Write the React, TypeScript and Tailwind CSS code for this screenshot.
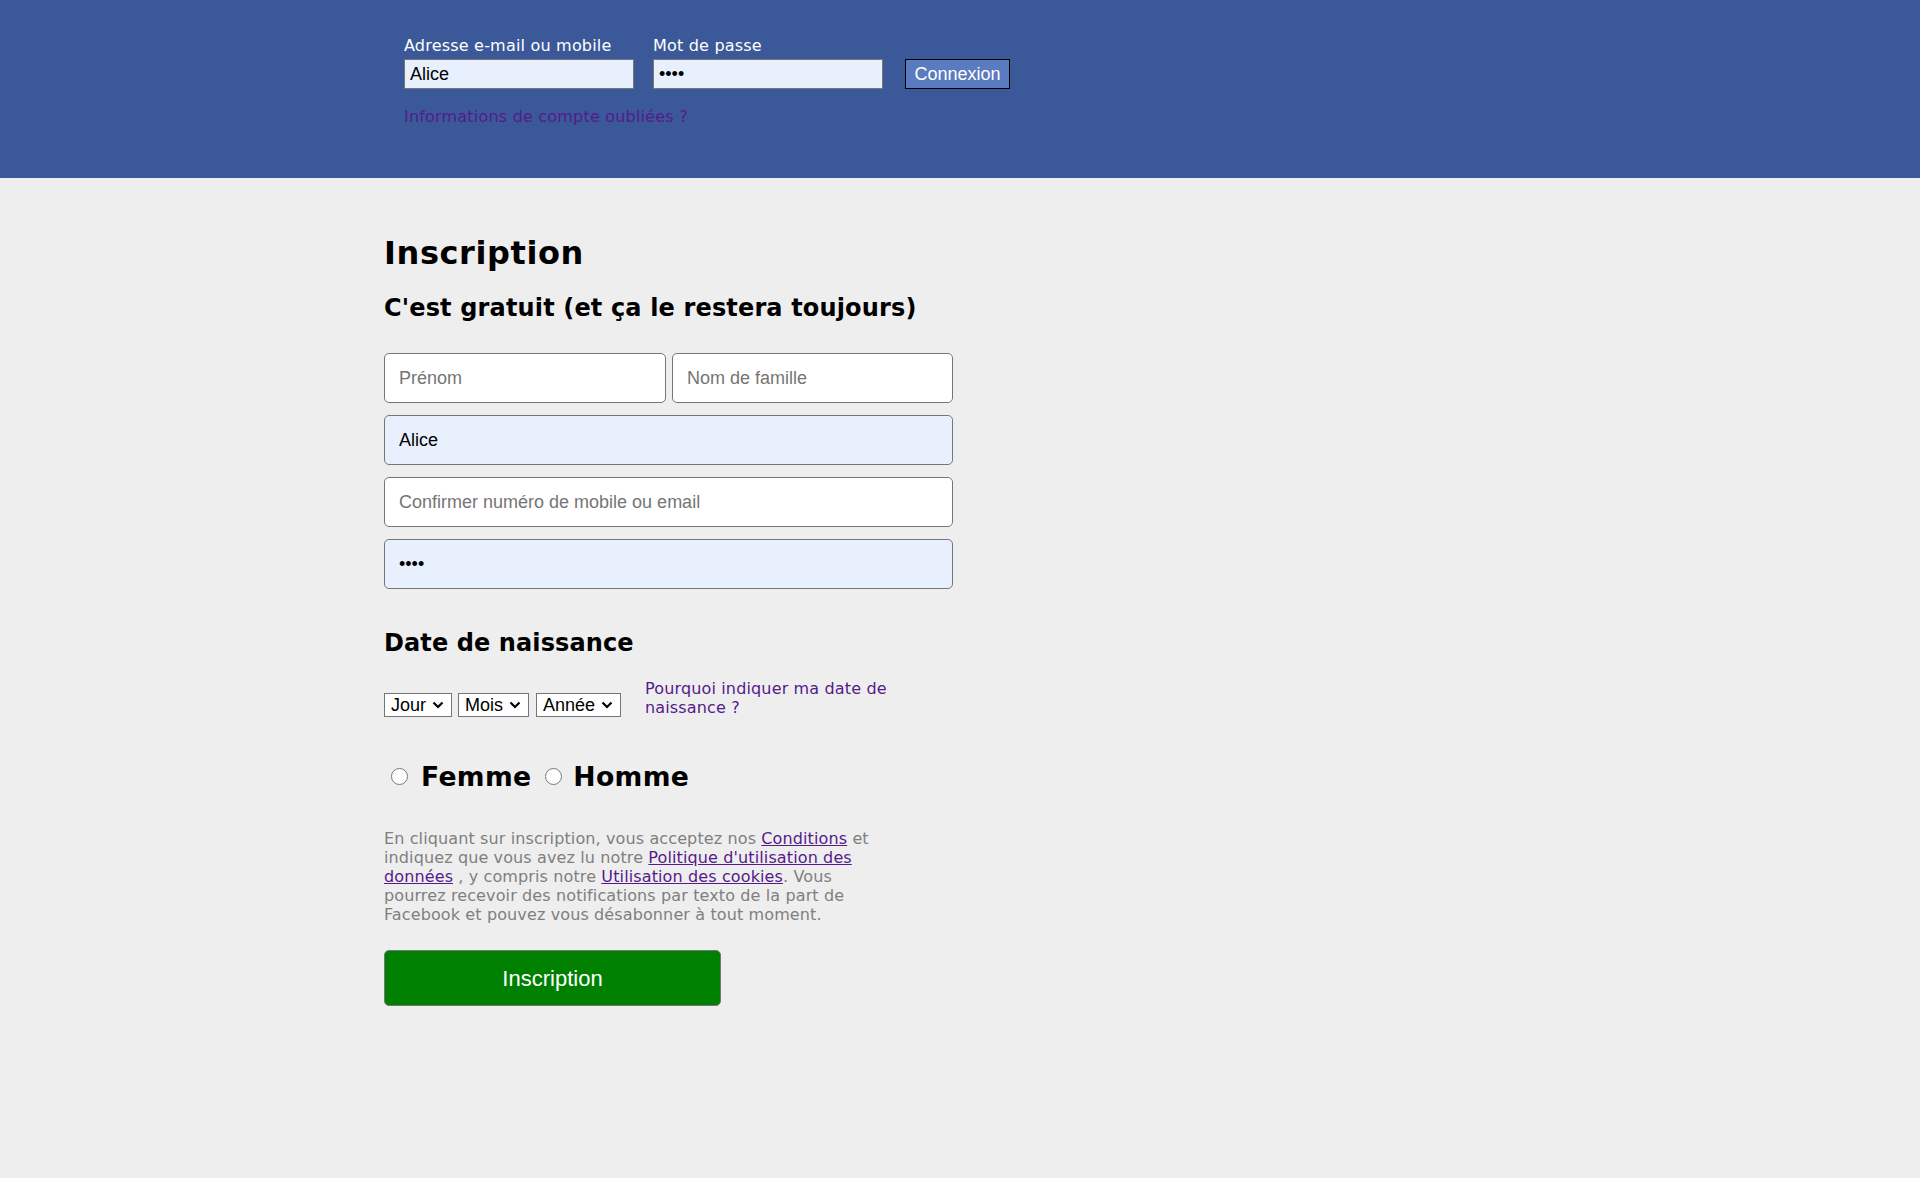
const sans = "font-['DejaVu_Sans',Verdana,sans-serif]";
const arial = "font-['Liberation_Sans',Arial,sans-serif]";

function Chevron() {
  return (
    <svg width="12" height="8" viewBox="0 0 12 8" className="ml-[6px] shrink-0">
      <polyline points="1.5,1.5 6,6 10.5,1.5" fill="none" stroke="#000" strokeWidth="2.2" />
    </svg>
  );
}

function FakeSelect({ label, width }: { label: string; width: string }) {
  return (
    <div
      className={`flex h-[24px] items-center justify-between border border-[#767676] bg-white pr-[8px] pl-[6px] text-[18px] leading-none text-black ${arial} ${width}`}
    >
      <span>{label}</span>
      <Chevron />
    </div>
  );
}

export default function App() {
  return (
    <div className={`min-h-[1178px] bg-[#eeeeee] ${sans}`}>
      {/* Login bar */}
      <header className="h-[178px] bg-[#3b5998]">
        <div className="ml-[20%] pt-[36px] pl-[20px]">
          <div className="flex items-end">
            <div className="w-[230px]">
              <label className="mb-[4px] block text-[16px] leading-[19px] tracking-[0.2px] text-white">
                Adresse e-mail ou mobile
              </label>
              <input
                readOnly
                defaultValue="Alice"
                className={`block h-[30px] w-[230px] border border-[#767676] bg-[#e8f0fe] px-[5px] text-[18px] text-black outline-none ${arial}`}
              />
            </div>
            <div className="ml-[19px] w-[230px]">
              <label className="mb-[4px] block text-[16px] leading-[19px] tracking-[0.2px] text-white">
                Mot de passe
              </label>
              <input
                readOnly
                type="password"
                defaultValue="1234"
                className={`block h-[30px] w-[230px] border border-[#767676] bg-[#e8f0fe] px-[5px] text-[18px] text-black outline-none ${arial}`}
              />
            </div>
            <button
              className={`ml-[22px] h-[30px] w-[105px] border border-black bg-[#5b7bc1] text-[18px] text-white ${arial}`}
            >
              Connexion
            </button>
          </div>
          <a
            href="#"
            className="mt-[18px] block text-[16px] leading-[19px] tracking-[0.2px] text-[#551a8b]"
          >
            Informations de compte oubliées ?
          </a>
        </div>
      </header>

      {/* Sign-up form */}
      <main className="ml-[20%] w-[569px] pt-[57px] pb-[40px]">
        <h1 className="text-[32px] leading-[37px] font-bold tracking-[0.6px] text-black">Inscription</h1>
        <h2 className="mt-[22px] text-[24px] leading-[28px] font-bold tracking-[0.15px] text-black">
          C'est gratuit (et ça le restera toujours)
        </h2>

        <div className={`mt-[31px] flex flex-col gap-[12px] ${arial}`}>
          <div className="flex gap-[6px]">
            <input
              placeholder="Prénom"
              className="h-[50px] w-[282px] rounded-[5px] border border-[#767676] bg-white px-[14px] text-[18px] outline-none placeholder:text-[#757575]"
            />
            <input
              placeholder="Nom de famille"
              className="h-[50px] flex-1 rounded-[5px] border border-[#767676] bg-white px-[14px] text-[18px] outline-none placeholder:text-[#757575]"
            />
          </div>
          <input
            readOnly
            defaultValue="Alice"
            className="h-[50px] w-full rounded-[5px] border border-[#767676] bg-[#e8f0fe] px-[14px] text-[18px] text-black outline-none"
          />
          <input
            placeholder="Confirmer numéro de mobile ou email"
            className="h-[50px] w-full rounded-[5px] border border-[#767676] bg-white px-[14px] text-[18px] outline-none placeholder:text-[#757575]"
          />
          <input
            readOnly
            type="password"
            defaultValue="1234"
            className="h-[50px] w-full rounded-[5px] border border-[#767676] bg-[#e8f0fe] px-[14px] text-[18px] text-black outline-none"
          />
        </div>

        <h3 className="mt-[40px] text-[24px] leading-[28px] font-bold tracking-[0.1px] text-black">
          Date de naissance
        </h3>

        <div className="mt-[22px] flex items-end">
          <FakeSelect label="Jour" width="w-[68px]" />
          <div className="ml-[6px]">
            <FakeSelect label="Mois" width="w-[71px]" />
          </div>
          <div className="ml-[7px]">
            <FakeSelect label="Année" width="w-[85px]" />
          </div>
          <a
            href="#"
            className="ml-[24px] w-[300px] text-[16px] leading-[19px] tracking-[0.15px] text-[#551a8b]"
          >
            Pourquoi indiquer ma date de naissance ?
          </a>
        </div>

        <div className="mt-[44px] flex items-center text-[26.67px] leading-[31px] font-bold tracking-[0.3px] text-black">
          <input type="radio" name="sexe" className="ml-[7px] mr-[13px] h-[17px] w-[17px]" />
          <span>Femme</span>
          <input type="radio" name="sexe" className="ml-[14px] mr-[11px] h-[17px] w-[17px]" />
          <span>Homme</span>
        </div>

        <p className="mt-[37px] w-[500px] text-[16px] leading-[19px] tracking-[0.12px] text-[#7f7f7f]">
          En cliquant sur inscription, vous acceptez nos{" "}
          <a href="#" className="text-[#551a8b] underline">Conditions</a> et indiquez que vous avez
          lu notre{" "}
          <a href="#" className="text-[#551a8b] underline">Politique d'utilisation des données</a>{" "}
          , y compris notre{" "}
          <a href="#" className="text-[#551a8b] underline">Utilisation des cookies</a>. Vous pourrez
          recevoir des notifications par texto de la part de Facebook et pouvez vous désabonner à
          tout moment.
        </p>

        <button
          className={`mt-[26px] h-[56px] w-[337px] rounded-[5px] border border-[#767676] bg-[#008000] text-[22px] text-white ${arial}`}
        >
          Inscription
        </button>
      </main>
    </div>
  );
}
